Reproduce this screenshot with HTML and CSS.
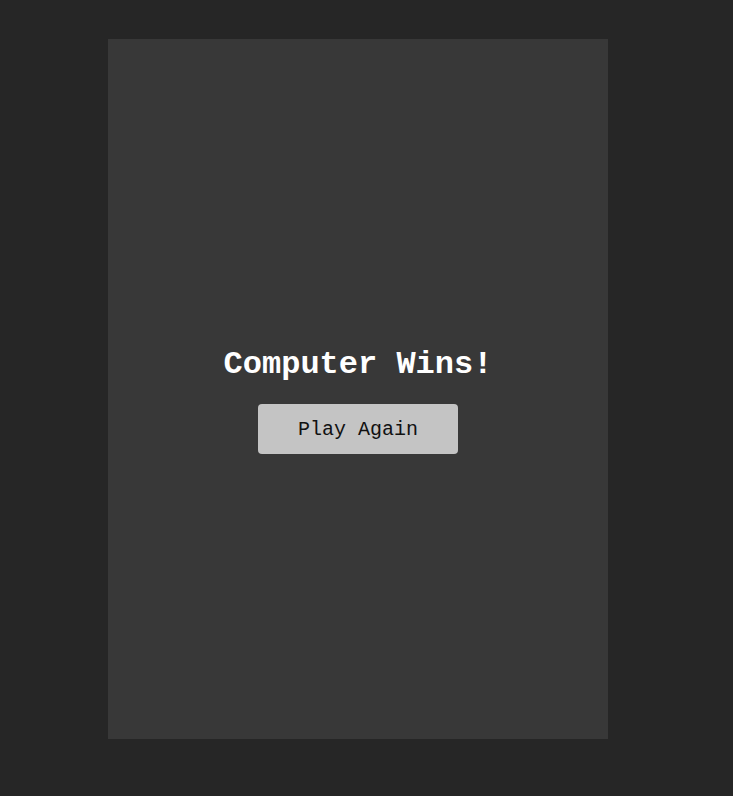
FILE: index.html
```html
<!DOCTYPE html>
<html lang="en">
<head>
<meta charset="utf-8">
<title>Computer Wins!</title>
<link rel="stylesheet" href="styles.css">
</head>
<body>
<main class="board">
  <h1 class="result">Computer Wins!</h1>
  <button class="again" type="button">Play Again</button>
</main>
</body>
</html>
```

FILE: styles.css
```css
html, body {
  margin: 0;
  padding: 0;
}
body {
  background: #262626;
  font-family: "Liberation Mono", "DejaVu Sans Mono", monospace;
  min-height: 796px;
  padding-top: 39px;
  box-sizing: border-box;
}
.board {
  width: 500px;
  height: 700px;
  margin-left: 108px;
  padding-top: 2px;
  box-sizing: border-box;
  background: #383838;
  display: flex;
  flex-direction: column;
  align-items: center;
  justify-content: center;
}
.result {
  margin: 21px 0;
  font-size: 32px;
  font-weight: bold;
  color: #ffffff;
  line-height: 36px;
}
.again {
  width: 200px;
  height: 50px;
  border: none;
  border-radius: 4px;
  background: #c4c4c4;
  color: #111111;
  font-family: "Liberation Mono", "DejaVu Sans Mono", monospace;
  font-size: 20px;
  padding: 0;
}
```
